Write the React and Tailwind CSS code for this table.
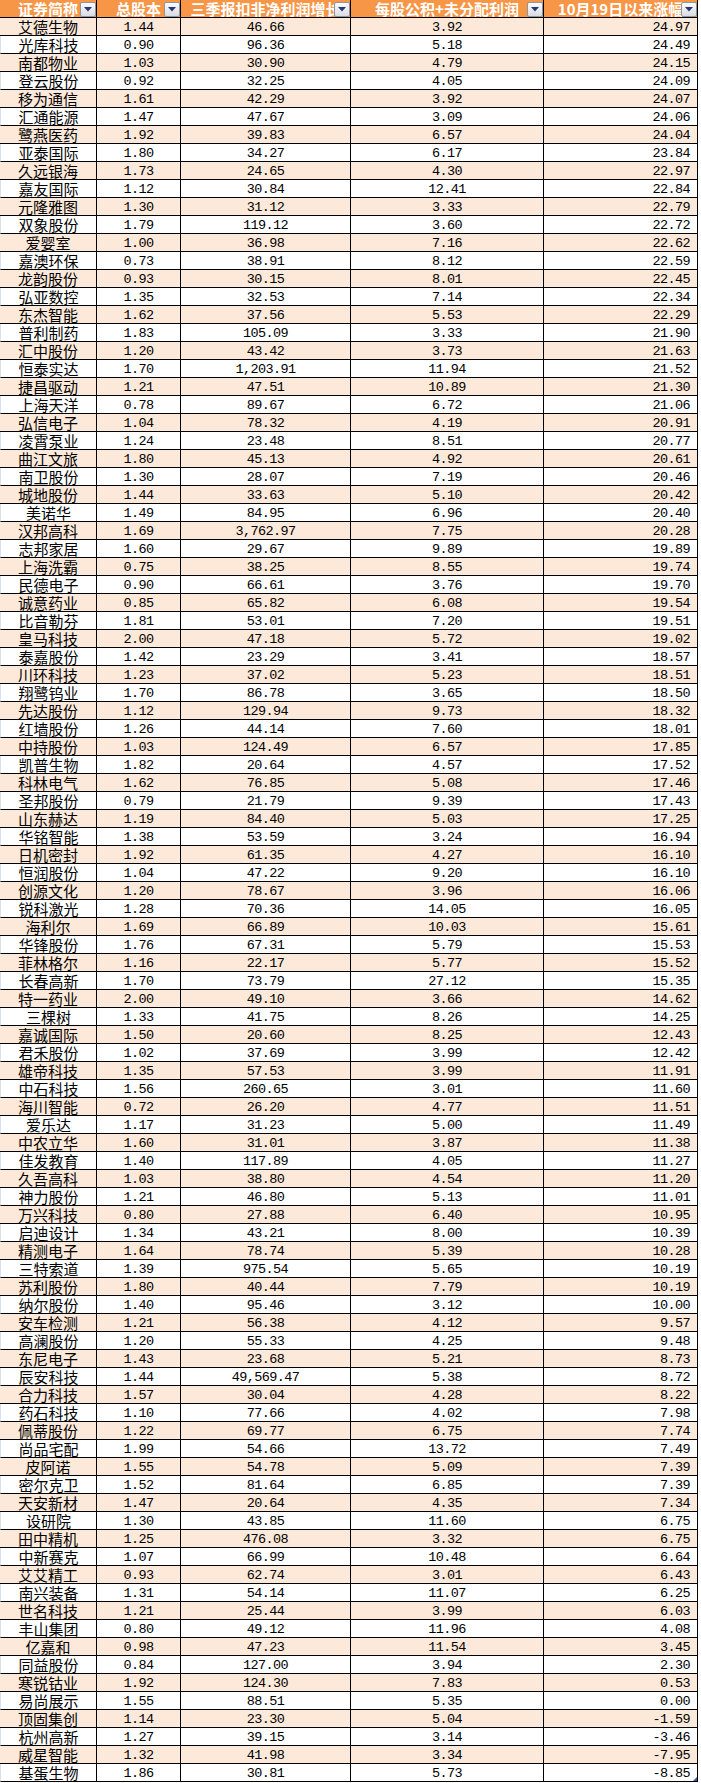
import React from "react";

const data = `艾德生物|1.44|46.66|3.92|24.97
光库科技|0.90|96.36|5.18|24.49
南都物业|1.03|30.90|4.79|24.15
登云股份|0.92|32.25|4.05|24.09
移为通信|1.61|42.29|3.92|24.07
汇通能源|1.47|47.67|3.09|24.06
鹭燕医药|1.92|39.83|6.57|24.04
亚泰国际|1.80|34.27|6.17|23.84
久远银海|1.73|24.65|4.30|22.97
嘉友国际|1.12|30.84|12.41|22.84
元隆雅图|1.30|31.12|3.33|22.79
双象股份|1.79|119.12|3.60|22.72
爱婴室|1.00|36.98|7.16|22.62
嘉澳环保|0.73|38.91|8.12|22.59
龙韵股份|0.93|30.15|8.01|22.45
弘亚数控|1.35|32.53|7.14|22.34
东杰智能|1.62|37.56|5.53|22.29
普利制药|1.83|105.09|3.33|21.90
汇中股份|1.20|43.42|3.73|21.63
恒泰实达|1.70|1,203.91|11.94|21.52
捷昌驱动|1.21|47.51|10.89|21.30
上海天洋|0.78|89.67|6.72|21.06
弘信电子|1.04|78.32|4.19|20.91
凌霄泵业|1.24|23.48|8.51|20.77
曲江文旅|1.80|45.13|4.92|20.61
南卫股份|1.30|28.07|7.19|20.46
城地股份|1.44|33.63|5.10|20.42
美诺华|1.49|84.95|6.96|20.40
汉邦高科|1.69|3,762.97|7.75|20.28
志邦家居|1.60|29.67|9.89|19.89
上海洗霸|0.75|38.25|8.55|19.74
民德电子|0.90|66.61|3.76|19.70
诚意药业|0.85|65.82|6.08|19.54
比音勒芬|1.81|53.01|7.20|19.51
皇马科技|2.00|47.18|5.72|19.02
泰嘉股份|1.42|23.29|3.41|18.57
川环科技|1.23|37.02|5.23|18.51
翔鹭钨业|1.70|86.78|3.65|18.50
先达股份|1.12|129.94|9.73|18.32
红墙股份|1.26|44.14|7.60|18.01
中持股份|1.03|124.49|6.57|17.85
凯普生物|1.82|20.64|4.57|17.52
科林电气|1.62|76.85|5.08|17.46
圣邦股份|0.79|21.79|9.39|17.43
山东赫达|1.19|84.40|5.03|17.25
华铭智能|1.38|53.59|3.24|16.94
日机密封|1.92|61.35|4.27|16.10
恒润股份|1.04|47.22|9.20|16.10
创源文化|1.20|78.67|3.96|16.06
锐科激光|1.28|70.36|14.05|16.05
海利尔|1.69|66.89|10.03|15.61
华锋股份|1.76|67.31|5.79|15.53
菲林格尔|1.16|22.17|5.77|15.52
长春高新|1.70|73.79|27.12|15.35
特一药业|2.00|49.10|3.66|14.62
三棵树|1.33|41.75|8.26|14.25
嘉诚国际|1.50|20.60|8.25|12.43
君禾股份|1.02|37.69|3.99|12.42
雄帝科技|1.35|57.53|3.99|11.91
中石科技|1.56|260.65|3.01|11.60
海川智能|0.72|26.20|4.77|11.51
爱乐达|1.17|31.23|5.00|11.49
中农立华|1.60|31.01|3.87|11.38
佳发教育|1.40|117.89|4.05|11.27
久吾高科|1.03|38.80|4.54|11.20
神力股份|1.21|46.80|5.13|11.01
万兴科技|0.80|27.88|6.40|10.95
启迪设计|1.34|43.21|8.00|10.39
精测电子|1.64|78.74|5.39|10.28
三特索道|1.39|975.54|5.65|10.19
苏利股份|1.80|40.44|7.79|10.19
纳尔股份|1.40|95.46|3.12|10.00
安车检测|1.21|56.38|4.12|9.57
高澜股份|1.20|55.33|4.25|9.48
东尼电子|1.43|23.68|5.21|8.73
辰安科技|1.44|49,569.47|5.38|8.72
合力科技|1.57|30.04|4.28|8.22
药石科技|1.10|77.66|4.02|7.98
佩蒂股份|1.22|69.77|6.75|7.74
尚品宅配|1.99|54.66|13.72|7.49
皮阿诺|1.55|54.78|5.09|7.39
密尔克卫|1.52|81.64|6.85|7.39
天安新材|1.47|20.64|4.35|7.34
设研院|1.30|43.85|11.60|6.75
田中精机|1.25|476.08|3.32|6.75
中新赛克|1.07|66.99|10.48|6.64
艾艾精工|0.93|62.74|3.01|6.43
南兴装备|1.31|54.14|11.07|6.25
世名科技|1.21|25.44|3.99|6.03
丰山集团|0.80|49.12|11.96|4.08
亿嘉和|0.98|47.23|11.54|3.45
同益股份|0.84|127.00|3.94|2.30
寒锐钴业|1.92|124.30|7.83|0.53
易尚展示|1.55|88.51|5.35|0.00
顶固集创|1.14|23.30|5.04|-1.59
杭州高新|1.27|39.15|3.14|-3.46
威星智能|1.32|41.98|3.34|-7.95
基蛋生物|1.86|30.81|5.73|-8.85`
  .split("\n")
  .map((l) => l.split("|"));

const headers = [
  "证券简称",
  "总股本",
  "三季报扣非净利润增长",
  "每股公积+未分配利润",
  "10月19日以来涨幅",
];

function FilterButton() {
  return (
    <div className="absolute right-0 top-[2px] w-[16px] h-[15px] border border-[#8e95a3] rounded-[2px] bg-gradient-to-b from-[#fbfbfb] to-[#d9dce3] flex items-center justify-center">
      <svg width="8" height="5" viewBox="0 0 8 5">
        <polygon points="0,0 8,0 4,4.5" fill="#26367a" />
      </svg>
    </div>
  );
}

const cjk = { fontFamily: '"Noto Sans CJK SC", "Noto Sans", sans-serif' };
const mono = { fontFamily: '"Liberation Mono", "DejaVu Sans Mono", monospace' };

const numCell =
  "h-[18px] border-r border-b border-black whitespace-nowrap text-[13.5px] tracking-[-0.6px] leading-[20px] text-black";

export default function App() {
  return (
    <div className="w-[701px] bg-white">
      <div className="w-[698px]">
        <div className="grid grid-cols-[97px_84px_170px_193px_154px] h-[18px] bg-[#f79646]">
          {headers.map((h, i) => (
            <div
              key={i}
              className="relative h-[18px] border-r border-b border-black whitespace-nowrap text-white font-bold text-[15px] leading-[17px] text-center"
              style={cjk}
            >
              <span>{h}</span>
              <FilterButton />
            </div>
          ))}
        </div>
        {data.map((r, idx) => {
          const odd = idx % 2 === 0;
          return (
            <div
              key={idx}
              className={
                "grid grid-cols-[97px_84px_170px_193px_154px] h-[18px] " +
                (odd ? "bg-[#fde9d9]" : "bg-white")
              }
            >
              <div
                className={
                  "h-[18px] border-r border-b border-black whitespace-nowrap text-[15px] leading-[18px] text-center text-black " +
                  (odd ? "" : "border-l border-l-[#d6e0ee]")
                }
                style={cjk}
              >
                {r[0]}
              </div>
              <div className={numCell + " text-center"} style={mono}>
                {r[1]}
              </div>
              <div className={numCell + " text-center"} style={mono}>
                {r[2]}
              </div>
              <div className={numCell + " text-center"} style={mono}>
                {r[3]}
              </div>
              <div className={numCell + " relative text-right pr-[7px]"} style={mono}>
                {r[4]}
                {idx === data.length - 1 && (
                  <div className="absolute right-0 bottom-0 w-0 h-0 border-l-[4px] border-l-transparent border-b-[4px] border-b-[#3a57a6]" />
                )}
              </div>
            </div>
          );
        })}
      </div>
    </div>
  );
}
